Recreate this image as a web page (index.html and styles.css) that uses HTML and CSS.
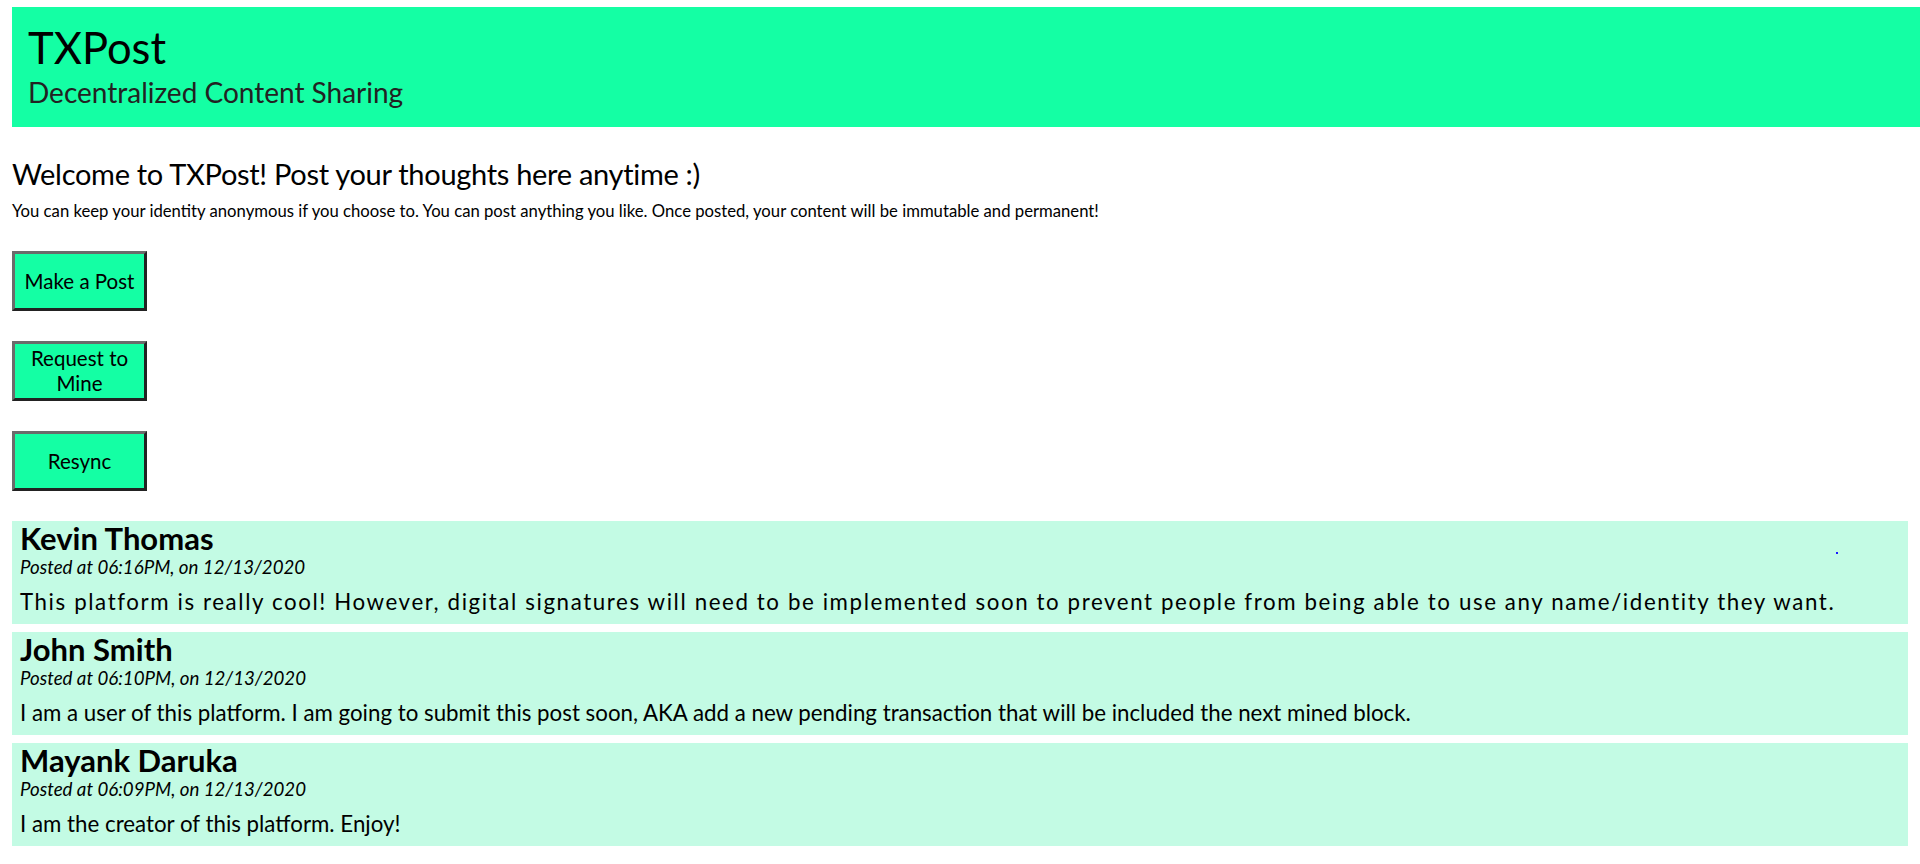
FILE: index.html
```html
<!DOCTYPE html>
<html lang="en">
<head>
<meta charset="utf-8">
<title>TXPost</title>
<link rel="stylesheet" href="styles.css">
</head>
<body>
<header class="site-header">
  <h1 class="site-title">TXPost</h1>
  <p class="site-subtitle">Decentralized Content Sharing</p>
</header>
<main class="page">
  <section class="intro">
    <h2 class="intro-title">Welcome to TXPost! Post your thoughts here anytime :)</h2>
    <p class="intro-text">You can keep your identity anonymous if you choose to. You can post anything you like. Once posted, your content will be immutable and permanent!</p>
  </section>
  <div class="actions">
    <button class="btn" type="button">Make a Post</button>
    <button class="btn" type="button">Request to Mine</button>
    <button class="btn" type="button">Resync</button>
  </div>
  <div class="posts">
    <article class="post">
      <h3 class="post-author">Kevin Thomas</h3>
      <p class="post-date">Posted at 06:16PM, on 12/13/2020</p>
      <p class="post-body post-body--wide">This platform is really cool! However, digital signatures will need to be implemented soon to prevent people from being able to use any name/identity they want.</p>
      <span class="post-marker"></span>
    </article>
    <article class="post">
      <h3 class="post-author">John Smith</h3>
      <p class="post-date">Posted at 06:10PM, on 12/13/2020</p>
      <p class="post-body">I am a user of this platform. I am going to submit this post soon, AKA add a new pending transaction that will be included the next mined block.</p>
    </article>
    <article class="post">
      <h3 class="post-author">Mayank Daruka</h3>
      <p class="post-date">Posted at 06:09PM, on 12/13/2020</p>
      <p class="post-body">I am the creator of this platform. Enjoy!</p>
    </article>
  </div>
</main>
</body>
</html>
```

FILE: styles.css
```css
* { box-sizing: border-box; }
html, body { margin: 0; padding: 0; background: #fff; }
body {
  font-family: "Lato", "Open Sans", sans-serif;
  color: #000;
  padding-top: 7px;
  overflow-x: hidden;
}
h1, h2, h3, p { margin: 0; }

.site-header {
  margin-left: 12px;
  background: #14ffa4;
  padding: 15px 16px 18px;
  height: 120px;
}
.site-title {
  font-size: 43.5px;
  font-weight: 400;
  line-height: 50px;
}
.site-subtitle {
  margin-top: 3px;
  font-size: 28px;
  line-height: 34px;
  color: #222;
}

.page { padding: 0 12px; }

.intro { padding-top: 28px; }
.intro-title {
  font-size: 29px;
  font-weight: 400;
  letter-spacing: -0.3px;
  line-height: 38px;
}
.intro-text {
  margin-top: 9px;
  font-size: 16.7px;
  line-height: 18px;
}

.actions {
  display: flex;
  flex-direction: column;
  align-items: flex-start;
  gap: 30px;
  padding-top: 31px;
}
.btn {
  width: 135px;
  height: 60px;
  background: #14ffa4;
  border: 3px solid;
  border-color: #6b6b6b #222 #222 #6b6b6b;
  font-family: inherit;
  font-size: 20.5px;
  line-height: 25px;
  color: #000;
  padding: 0 6px;
  cursor: pointer;
}

.posts {
  display: flex;
  flex-direction: column;
  gap: 8px;
  padding-top: 30px;
}
.post {
  position: relative;
  background: #c3fbe4;
  height: 103px;
  padding: 0 8px;
}
.post-author {
  font-size: 31px;
  font-weight: 700;
  line-height: 34px;
}
.post-date {
  margin-top: 1px;
  font-size: 18.7px;
  font-style: italic;
  line-height: 22px;
}
.post-body {
  margin-top: 9px;
  font-size: 22.3px;
  line-height: 30px;
}
.post-body--wide {
  letter-spacing: 1.6px;
}
.post-marker {
  position: absolute;
  left: 1824px;
  top: 31px;
  width: 2px;
  height: 2px;
  background: #1a1aff;
}
```
